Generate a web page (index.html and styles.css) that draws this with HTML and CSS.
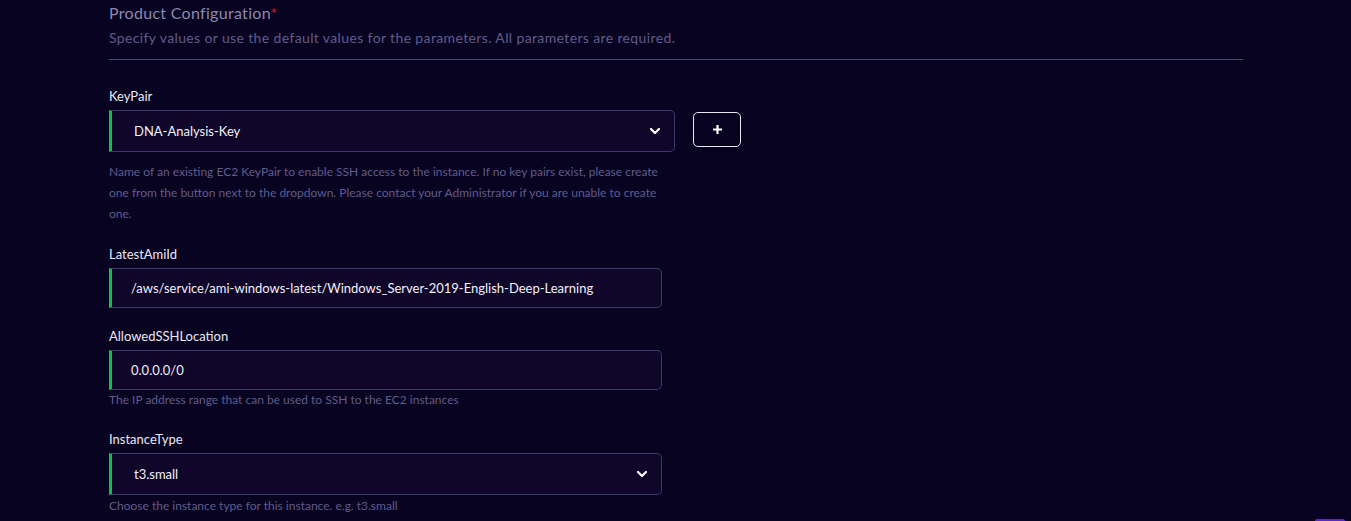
FILE: index.html
```html
<!DOCTYPE html>
<html>
<head>
<meta charset="utf-8">
<link rel="stylesheet" href="styles.css">
</head>
<body>
<div class="page">
  <section class="config">
    <header class="head">
      <h2 class="title">Product Configuration<span class="req">*</span></h2>
      <p class="subtitle">Specify values or use the default values for the parameters. All parameters are required.</p>
    </header>

    <div class="field f1">
      <label class="label">KeyPair</label>
      <div class="row">
        <div class="control select wide">
          <span class="value">DNA-Analysis-Key</span>
          <svg class="chev" width="12" height="8" viewBox="0 0 12 8"><path d="M2 2l4 4 4-4" fill="none" stroke="#fff" stroke-width="2.2" stroke-linecap="round" stroke-linejoin="round"/></svg>
        </div>
        <button class="add">
          <svg width="11" height="11" viewBox="0 0 11 11"><path d="M5.5 1v9M1 5.5h9" stroke="#fff" stroke-width="2.2"/></svg>
        </button>
      </div>
      <p class="help multi">Name of an existing EC2 KeyPair to enable SSH access to the instance. If no key pairs exist, please create one from the button next to the dropdown. Please contact your Administrator if you are unable to create one.</p>
    </div>

    <div class="field f2">
      <label class="label">LatestAmiId</label>
      <div class="control input">
        <span class="value">/aws/service/ami-windows-latest/Windows_Server-2019-English-Deep-Learning</span>
      </div>
    </div>

    <div class="field f3">
      <label class="label">AllowedSSHLocation</label>
      <div class="control input">
        <span class="value">0.0.0.0/0</span>
      </div>
      <p class="help">The IP address range that can be used to SSH to the EC2 instances</p>
    </div>

    <div class="field f4">
      <label class="label">InstanceType</label>
      <div class="control select">
        <span class="value">t3.small</span>
        <svg class="chev" width="12" height="8" viewBox="0 0 12 8"><path d="M2 2l4 4 4-4" fill="none" stroke="#fff" stroke-width="2.2" stroke-linecap="round" stroke-linejoin="round"/></svg>
      </div>
      <p class="help">Choose the instance type for this instance. e.g. t3.small</p>
    </div>
  </section>
  <div class="corner"></div>
</div>
</body>
</html>
```

FILE: styles.css
```css
* { box-sizing: border-box; }
html, body {
  margin: 0;
  padding: 0;
  background: #070320;
  height: 100%;
  overflow: hidden;
}
body {
  font-family: Lato, "Open Sans", sans-serif;
  color: #e8e6f4;
}
.page {
  position: relative;
  height: 521px;
  padding: 0 108px 0 109px;
}
.config {
  width: 1134px;
}
.head {
  border-bottom: 1px solid #4a4570;
  padding-top: 3px;
  padding-bottom: 11px;
}
.title {
  margin: 0;
  font-size: 16px;
  font-weight: 400;
  line-height: 20px;
  letter-spacing: 0.3px;
  color: #8d89ad;
}
.req { color: #c0283a; }
.subtitle {
  margin: 5px 0 0;
  font-size: 14px;
  line-height: 20px;
  letter-spacing: 0.37px;
  color: #615c8c;
}
.field {
  display: flex;
  flex-direction: column;
}
.f1 { padding-top: 28px; }
.f2 { padding-top: 22px; }
.f3 { padding-top: 20px; }
.f4 { padding-top: 21px; }
.label {
  font-size: 13px;
  line-height: 16px;
  color: #eae8f5;
  margin-bottom: 6px;
}
.row {
  display: flex;
  align-items: flex-start;
  gap: 18px;
}
.control {
  width: 553px;
  height: 40px;
  display: flex;
  align-items: center;
  background: #0f0629;
  border: 1px solid #3d386a;
  border-left: 3px solid #12bf4b;
  border-radius: 0 5px 5px 0;
  font-size: 13px;
  color: #f1f0f8;
}
.control.select { height: 42px; padding: 0 13px 0 22px; justify-content: space-between; }
.control.wide { width: 566px; }
.control.input { padding: 0 0 0 19px; }
.chev { display: block; }
.add {
  width: 48px;
  height: 35px;
  background: transparent;
  border: 1px solid #e9e8f2;
  border-radius: 5px;
  display: flex;
  align-items: center;
  justify-content: center;
  padding: 0;
  margin-top: 2px;
}
.add svg { display: block; }
.help {
  margin: 0;
  font-size: 12px;
  line-height: 20px;
  color: #615c8c;
}
.help.multi {
  width: 552px;
  margin-top: 9px;
  line-height: 21px;
}
.f4 .help { margin-top: 1px; }
.corner {
  position: absolute;
  right: 6px;
  bottom: 0;
  width: 30px;
  height: 2px;
  background: #5a2bc9;
  border-radius: 2px 2px 0 0;
}
```
